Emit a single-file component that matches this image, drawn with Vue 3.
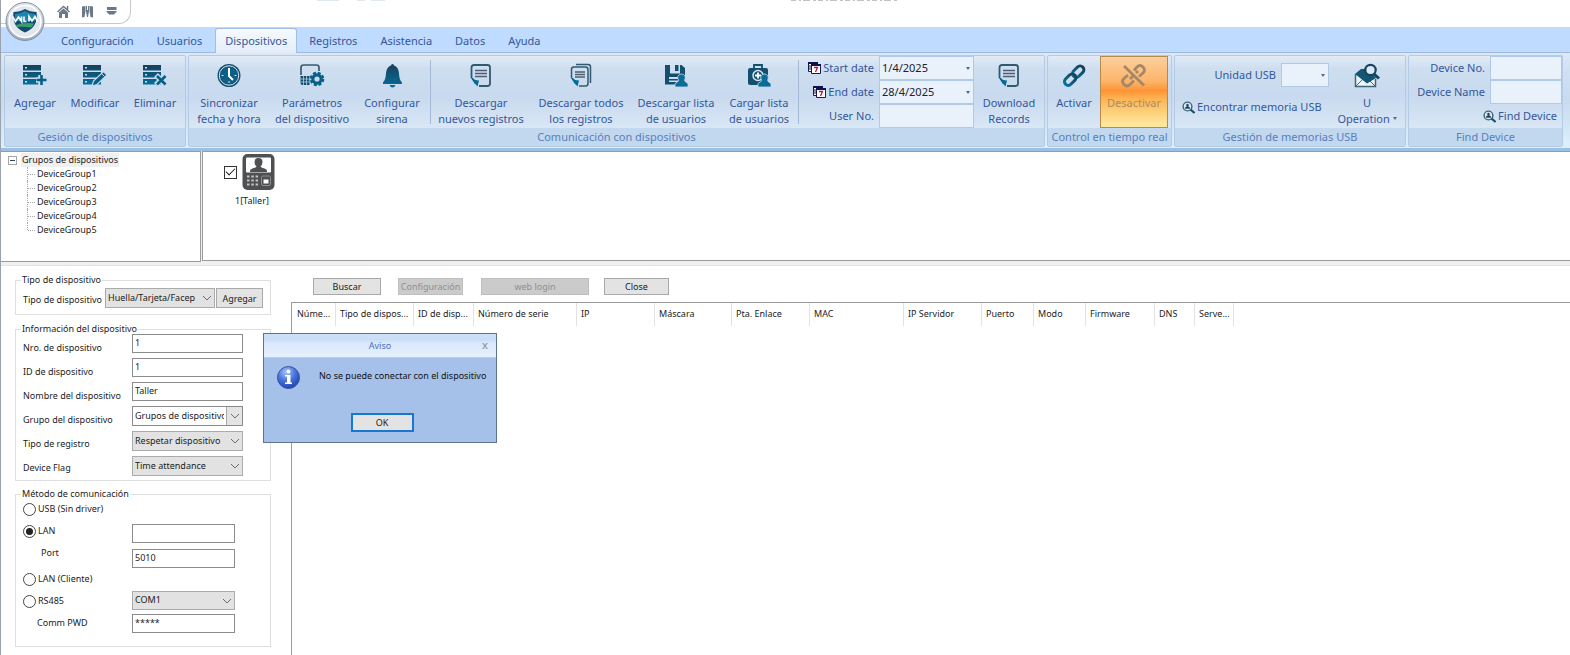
<script setup>
import { ref } from 'vue'

const tabs = ['Configuración', 'Usuarios', 'Dispositivos', 'Registros', 'Asistencia', 'Datos', 'Ayuda']
const activeTab = ref('Dispositivos')

const manage = [
  { icon: 'add', label: 'Agregar' },
  { icon: 'edit', label: 'Modificar' },
  { icon: 'remove', label: 'Eliminar' },
]
const sync = [
  { icon: 'clock', label: 'Sincronizar\nfecha y hora', size: 'w80' },
  { icon: 'params', label: 'Parámetros\ndel dispositivo', size: 'w86' },
  { icon: 'bell', label: 'Configurar\nsirena', size: 'w74' },
]
const transfer = [
  { icon: 'note', label: 'Descargar\nnuevos registros', size: 'w100' },
  { icon: 'notes', label: 'Descargar todos\nlos registros', size: 'w100' },
  { icon: 'save', label: 'Descargar lista\nde usuarios', size: 'w90' },
  { icon: 'kit', label: 'Cargar lista\nde usuarios', size: 'w76' },
]
const groups = ['DeviceGroup1', 'DeviceGroup2', 'DeviceGroup3', 'DeviceGroup4', 'DeviceGroup5']

const startDate = ref('1/4/2025')
const endDate = ref('28/4/2025')
const userNo = ref('')
const deviceChecked = ref(true)
const deviceNo = ref('1')
const deviceId = ref('1')
const deviceName = ref('Taller')
const link = ref('lan')
const address = ref('')
const port = ref('5010')
const password = ref('*****')

const columns = [
  { name: 'Núme...', width: 44 },
  { name: 'Tipo de dispos...', width: 78 },
  { name: 'ID de disp...', width: 60 },
  { name: 'Número de serie', width: 103 },
  { name: 'IP', width: 78 },
  { name: 'Máscara', width: 77 },
  { name: 'Pta. Enlace', width: 78 },
  { name: 'MAC', width: 94 },
  { name: 'IP Servidor', width: 78 },
  { name: 'Puerto', width: 52 },
  { name: 'Modo', width: 52 },
  { name: 'Firmware', width: 69 },
  { name: 'DNS', width: 40 },
  { name: 'Serve...', width: 39 },
]
</script>

<template>
  <div class="window">
    <svg class="defs" width="0" height="0" aria-hidden="true">
      <defs>
        <linearGradient id="ink" x1="0" y1="0" x2="0" y2="1">
          <stop offset="0" stop-color="#17405a" />
          <stop offset="1" stop-color="#04709c" />
        </linearGradient>
        <radialGradient id="orb" cx=".5" cy=".35" r=".65">
          <stop offset="0" stop-color="#ffffff" />
          <stop offset=".6" stop-color="#d9dee6" />
          <stop offset="1" stop-color="#98a4b6" />
        </radialGradient>
        <radialGradient id="ball" cx=".4" cy=".25" r=".8">
          <stop offset="0" stop-color="#a9c4f8" />
          <stop offset=".5" stop-color="#4a73dc" />
          <stop offset="1" stop-color="#1f3fa8" />
        </radialGradient>
        <symbol id="i-server" viewBox="0 0 26 26">
          <path fill="url(#ink)" fill-rule="evenodd" d="M1 2h18v5.500H1zM3 4v1.500h2V4zM1 9h18v5.500H1zM3 11v1.500h2V11zM1 16h18v5.500H1zM3 18v1.500h2V18z" />
        </symbol>
        <symbol id="i-add" viewBox="0 0 26 26">
          <use href="#i-server" />
          <path stroke="#c9daee" stroke-width="5.500" d="M19 12v10M14 17h10" />
          <path stroke="#075e86" stroke-width="2.600" d="M19.500 12v10M14.500 17h10" />
        </symbol>
        <symbol id="i-edit" viewBox="0 0 26 26">
          <use href="#i-server" />
          <path fill="#075e86" stroke="#c9daee" stroke-width="1.200" d="M21.500 8.500l3.500 3.500-10 9.500-5 1.500 1.500-5z" />
          <path stroke="#c9daee" d="M19.500 10.500l3 3" />
        </symbol>
        <symbol id="i-remove" viewBox="0 0 26 26">
          <use href="#i-server" />
          <path stroke="#c9daee" stroke-width="5.500" d="M14 12l10 10M24 12L14 22" />
          <path stroke="#075e86" stroke-width="2.600" d="M15 13l8.500 8.500M23.500 13L15 21.500" />
        </symbol>
        <symbol id="i-clock" viewBox="0 0 26 26">
          <circle cx="13" cy="12.500" r="11.500" fill="#14506e" />
          <circle cx="13" cy="12.500" r="9.700" fill="none" stroke="#d7e5f5" />
          <circle cx="13" cy="12.500" r="8.600" fill="#0c5f86" />
          <path fill="none" stroke="#fff" stroke-width="2" d="M13 5v8l4 4" />
          <path stroke="#d7e5f5" d="M5.500 12.500h2M18.500 12.500h2M13 18v2" />
        </symbol>
        <symbol id="i-params" viewBox="0 0 26 26">
          <path fill="none" stroke="#3b5a70" stroke-width="1.700" d="M2 12V4.500Q2 2 4.500 2h13Q20 2 20 4.500V8" />
          <path fill="#14506e" d="M1.500 13h9v9H3.500q-2 0-2-2z" />
          <path stroke="#c9daee" stroke-width=".7" d="M1.500 16h9M1.500 19h9M4.500 13v9M7.500 13v9" />
          <circle cx="18" cy="16" r="7.500" fill="#c9daee" />
          <circle cx="18" cy="16" r="4.200" fill="none" stroke="#075e86" stroke-width="3.200" />
          <circle cx="18" cy="16" r="6.200" fill="none" stroke="#075e86" stroke-width="2.200" stroke-dasharray="3 1.870" />
        </symbol>
        <symbol id="i-bell" viewBox="0 0 26 26">
          <path fill="url(#ink)" d="M12 2.500a1.500 1.500 0 0 1 3 0q4.500 1.500 5 7.500c.3 5 1 7 3 9.500v1.500H4v-1.500c2-2.500 2.700-4.500 3-9.500q.5-6 5-7.500zM10.500 22h6q-1 2.500-3 2.500t-3-2.500z" />
        </symbol>
        <symbol id="i-note" viewBox="0 0 26 26">
          <path fill="none" stroke="#33596f" stroke-width="1.800" d="M3.500 15V4.500Q3.500 2 6 2h13.500Q22 2 22 4.500v16Q22 23 19.500 23H11" />
          <path fill="none" stroke="#4d5f70" stroke-width="1.300" d="M7 7.500h12M7 10.500h12M7 13.500h12" />
          <path fill="#056a96" d="M3 15h2q1.500 2.500 6 2.500l-1.500 6q-1-1.500-3-3z" />
        </symbol>
        <symbol id="i-notes" viewBox="0 0 26 26">
          <path fill="none" stroke="#33596f" stroke-width="1.500" d="M8 1.500h12q2.500 0 2.500 2.500v16M3.500 15V6.500Q3.500 4 6 4h11.500Q20 4 20 6.500v14q0 2.500-2.500 2.500H11" />
          <path fill="none" stroke="#4d5f70" stroke-width="1.300" d="M7 9h10M7 11.500h10M7 14h10" />
          <path fill="#056a96" d="M3 15h2q1.500 2.500 6 2.500l-1.500 6q-1-1.500-3-3z" />
        </symbol>
        <symbol id="i-user" viewBox="0 0 26 26">
          <path fill="#0a6c98" stroke="#c9daee" stroke-width=".8" d="M18.500 11a3.700 3.700 0 0 1 3 6q-.5 1 .5 1.500l3 2v3.500H12v-3.500l3-2q1-.5.500-1.500a3.700 3.700 0 0 1 3-6z" />
        </symbol>
        <symbol id="i-save" viewBox="0 0 26 26">
          <path fill="#14506e" d="M2 2h5v8.500h10V2h1.500L22 5v16.500h-4V14H6v7.500H2z" />
          <path fill="#14506e" d="M12 2h3.500v6H12zM6 16h10v1.500H6zM6 19h10v2.500H6z" />
          <use href="#i-user" />
        </symbol>
        <symbol id="i-kit" viewBox="0 0 26 26">
          <path fill="none" stroke="#14506e" stroke-width="1.800" d="M8 5V2h8v3" />
          <rect x="2" y="5" width="20" height="17" rx="2" fill="#14506e" />
          <circle cx="12" cy="12.500" r="5" fill="none" stroke="#d7e5f5" stroke-width="1.500" />
          <path stroke="#fff" stroke-width="1.800" d="M12 9.500v6M9 12.500h6" />
          <use href="#i-user" />
        </symbol>
        <symbol id="i-link" viewBox="0 0 26 26">
          <g fill="none" stroke="url(#ink)" stroke-width="3">
            <rect x="-3.500" y="-6.500" width="7.500" height="13" rx="3.700" transform="translate(17 8.500) rotate(45)" />
            <rect x="-3.500" y="-6.500" width="7.500" height="13" rx="3.700" transform="translate(9 16.500) rotate(45)" />
          </g>
        </symbol>
        <symbol id="i-unlink" viewBox="0 0 26 26">
          <g fill="none" stroke="#a58868" stroke-width="2.800">
            <path d="M13 7.500l3-3.500q3-3 6 0t0 6l-4 3.500" />
            <path d="M13 17.500l-4 4q-3 3-6 0t0-6L7 12" />
            <path d="M3 3l20 19.500M9 16l3-3M15 10l2-2" />
          </g>
        </symbol>
        <symbol id="i-mail" viewBox="0 0 26 26">
          <path fill="#eef4fb" stroke="#3f6579" stroke-width="1.500" d="M1.500 11v12.500h20V16" />
          <path fill="none" stroke="#3f6579" d="M2 23l7-7M21 23l-6-6" />
          <path fill="#125673" d="M1 11l6-5h7l8 9-9 5.500z" />
          <circle cx="16.500" cy="7" r="5.200" fill="#dbe8f6" stroke="#14445e" stroke-width="2.200" />
          <path stroke="#14445e" stroke-width="3" d="M20 11l5 4.500" />
        </symbol>
        <symbol id="i-find" viewBox="0 0 13 13">
          <circle cx="5.500" cy="5.500" r="4.400" fill="#dbe8f6" stroke="#3c6479" stroke-width="1.400" />
          <path fill="#24475a" d="M5.500 2.800a1.500 1.500 0 0 1 .8 2.600l1.700 1.200v1.200H3V6.600l1.700-1.200a1.500 1.500 0 0 1 .8-2.600z" />
          <path stroke="#14506e" stroke-width="2.200" d="M8.500 8.500l4 3.500" />
        </symbol>
        <symbol id="i-cal" viewBox="0 0 13 13">
          <path fill="#fff" stroke="#1a1a50" d="M.500 1.500h9v9h-9z" />
          <path fill="#10104e" d="M0 1h10v2H0zM1.500 4h1v5h-1z" />
          <path fill="#fff" stroke="#1a1a50" d="M3.500 3.500h9v9h-9z" />
          <path fill="#10104e" d="M3 3h10v2H3z" />
          <path fill="none" stroke="#b01c3c" stroke-width="1.300" d="M6 6.500h3.500L7.500 11" />
        </symbol>
      </defs>
    </svg>

    <header class="titlebar">
      <div class="quick">
        <button class="quick-btn" aria-label="Inicio">
          <svg width="13" height="13" viewBox="0 0 13 13"><path fill="#6b7888" d="M6.500 3.500L11 7.500V13H8V9H5v4H2V7.500z" /><path fill="none" stroke="#6b7888" stroke-width="1.500" d="M.500 7l6-5.500 6 5.500M10.500 1v4" /></svg>
        </button>
        <button class="quick-btn" aria-label="Herramientas">
          <svg width="13" height="13" viewBox="0 0 13 13"><path fill="#6b7888" d="M1 1.500L4.500 1v5l-1 6L1 12.500zM12 1.500L8.500 1v5l1 6 2.500.500zM5 1h1v4h1V1h1v5.500L7 12H6L5 6.500z" /></svg>
        </button>
        <button class="quick-btn" aria-label="Personalizar">
          <svg width="13" height="13" viewBox="0 0 13 13"><path fill="#6b7888" d="M2 2h9.500v3H2zM1 6h11L9 9.500H4z" /></svg>
        </button>
      </div>
      <svg class="remnant" width="590" height="3" viewBox="0 0 590 3" aria-hidden="true">
        <path stroke="#dfe8ee" stroke-width="2" d="M6 0h22M46 0h8M60 0h14" />
        <path stroke="#c2c2c2" stroke-width="2" stroke-dasharray="5 3 2 2 7 3 3 2" d="M480 0h106" />
      </svg>
      <button class="orb" aria-label="Menú">
        <svg width="42" height="42" viewBox="0 0 42 42">
          <circle cx="21" cy="21.500" r="19" fill="url(#orb)" stroke="#8792a3" />
          <circle cx="21" cy="21.500" r="16" fill="#e2e7ee" stroke="#fff" stroke-width="1.500" />
          <path fill="#17486f" d="M9.500 12q6.500 0 11.500-3 5 3 11.500 3 1 8-2 13-3 5-9.500 7.500-6.500-2.500-9.500-7.500-3-5-2-13z" />
          <path fill="#1d86ae" d="M11 14q6-.5 10-3 4 2.500 10 3v7H11z" />
          <path fill="#36a066" d="M12 25q9-3 18-1.500-1 2.500-3 4-7-1-14-.500z" />
          <path fill="none" stroke="#f4fafc" stroke-width="1.700" d="M8.500 16.500l3 5 3-4.500 3 4.500V16.500M20 16.500v5h2.500M25 21.500v-5l3 4.500 3-4.500 2.500 5" />
        </svg>
      </button>
    </header>

    <nav class="tabs">
      <button v-for="t in tabs" :key="t" class="tab" :class="{ active: t === activeTab }" @click="activeTab = t">{{ t }}</button>
    </nav>

    <section class="ribbon">
      <div class="group">
        <div class="body">
          <button v-for="b in manage" :key="b.label" class="tool w60"><svg class="ico"><use :href="'#i-' + b.icon" /></svg><span>{{ b.label }}</span></button>
        </div>
        <div class="caption">Gesión de dispositivos</div>
      </div>

      <div class="group">
        <div class="body">
          <button v-for="b in sync" :key="b.label" class="tool" :class="b.size"><svg class="ico"><use :href="'#i-' + b.icon" /></svg><span>{{ b.label }}</span></button>
          <i class="sep"></i>
          <button v-for="b in transfer" :key="b.label" class="tool" :class="b.size"><svg class="ico"><use :href="'#i-' + b.icon" /></svg><span>{{ b.label }}</span></button>
          <i class="sep"></i>
          <div class="fields dates">
            <label for="start"><svg class="mini"><use href="#i-cal" /></svg>Start date</label>
            <span class="combo"><input id="start" v-model="startDate" /><i class="drop"></i></span>
            <label for="end"><svg class="mini"><use href="#i-cal" /></svg>End date</label>
            <span class="combo"><input id="end" v-model="endDate" /><i class="drop"></i></span>
            <label for="user">User No.</label>
            <span class="combo"><input id="user" v-model="userNo" /></span>
          </div>
          <button class="tool w68"><svg class="ico"><use href="#i-note" /></svg><span>Download<br />Records</span></button>
        </div>
        <div class="caption">Comunicación con dispositivos</div>
      </div>

      <div class="group">
        <div class="body live">
          <button class="tool w52"><svg class="ico"><use href="#i-link" /></svg><span>Activar</span></button>
          <button class="tool w68 hot" disabled><svg class="ico"><use href="#i-unlink" /></svg><span>Desactivar</span></button>
        </div>
        <div class="caption">Control en tiempo real</div>
      </div>

      <div class="group">
        <div class="body">
          <div class="usb">
            <div class="usb-row">
              <label for="usb">Unidad USB</label>
              <span class="combo small"><select id="usb"><option></option></select><i class="drop"></i></span>
            </div>
            <button class="inline"><svg class="mini"><use href="#i-find" /></svg>Encontrar memoria USB</button>
          </div>
          <button class="tool w76"><svg class="ico"><use href="#i-mail" /></svg><span>U<br />Operation <i class="caret"></i></span></button>
        </div>
        <div class="caption">Gestión de memorias USB</div>
      </div>

      <div class="group">
        <div class="body">
          <div class="finder">
            <div class="fields names">
              <label for="fno">Device No.</label>
              <span class="combo"><input id="fno" /></span>
              <label for="fname">Device Name</label>
              <span class="combo"><input id="fname" /></span>
            </div>
            <button class="inline right"><svg class="mini"><use href="#i-find" /></svg>Find Device</button>
          </div>
        </div>
        <div class="caption">Find Device</div>
      </div>
    </section>

    <section class="top">
      <div class="tree">
        <div class="root"><i class="minus"></i><span class="root-name">Grupos de dispositivos</span></div>
        <ul>
          <li v-for="g in groups" :key="g">{{ g }}</li>
        </ul>
      </div>
      <div class="devices">
        <label class="device">
          <input v-model="deviceChecked" type="checkbox" class="check" />
          <svg class="terminal" viewBox="0 0 33 37">
            <rect x=".5" y=".5" width="32" height="36" rx="5" fill="#4f5052" />
            <rect x="4" y="4" width="25" height="15" rx="1" fill="#fff" />
            <path fill="#4f5052" d="M16.500 4.500q4 0 4 4.200-.3 3-2 4.300 1 1.500 4 2t2.500 3.500H8q-.5-3 2.500-3.500t4-2q-1.700-1.300-2-4.300 0-4.200 4-4.200z" />
            <path stroke="#c4c4c4" stroke-width="2" stroke-dasharray="2.500 1.800" d="M5 23h11.500M5 27h11.500M5 31h11.500" />
            <rect x="19.500" y="22.500" width="9" height="9.500" rx="1.500" fill="none" stroke="#8d8e90" />
            <rect x="21.500" y="26" width="5" height="4" fill="#fff" />
          </svg>
          <span class="device-name">1[Taller]</span>
        </label>
      </div>
    </section>

    <section class="bottom">
      <form class="side" @submit.prevent>
        <fieldset class="type">
          <legend>Tipo de dispositivo</legend>
          <label for="kind">Tipo de dispositivo</label>
          <span class="pick"><select id="kind"><option>Huella/Tarjeta/Facep</option></select><svg class="chev"><path d="M1 1l4 4 4-4" /></svg></span>
          <button class="btn add">Agregar</button>
        </fieldset>

        <fieldset class="info">
          <legend>Información del dispositivo</legend>
          <div class="labels">
            <label for="d1">Nro. de dispositivo</label>
            <label for="d2">ID de dispositivo</label>
            <label for="d3">Nombre del dispositivo</label>
            <label for="d4">Grupo del dispositivo</label>
            <label for="d5">Tipo de registro</label>
            <label for="d6">Device Flag</label>
          </div>
          <div class="inputs">
            <input id="d1" v-model="deviceNo" class="box" />
            <input id="d2" v-model="deviceId" class="box" />
            <input id="d3" v-model="deviceName" class="box" />
            <span class="pick white"><select id="d4"><option>Grupos de dispositivos</option></select><svg class="chev"><path d="M1 1l4 4 4-4" /></svg></span>
            <span class="pick"><select id="d5"><option>Respetar dispositivo</option></select><svg class="chev"><path d="M1 1l4 4 4-4" /></svg></span>
            <span class="pick"><select id="d6"><option>Time attendance</option></select><svg class="chev"><path d="M1 1l4 4 4-4" /></svg></span>
          </div>
        </fieldset>

        <fieldset class="comm">
          <legend>Método de comunicación</legend>
          <div class="options">
            <label><input v-model="link" type="radio" class="radio" value="usb" />USB (Sin driver)</label>
            <label><input v-model="link" type="radio" class="radio" value="lan" />LAN</label>
            <label for="port" class="indent">Port</label>
            <label class="client"><input v-model="link" type="radio" class="radio" value="client" />LAN (Cliente)</label>
            <label><input v-model="link" type="radio" class="radio" value="rs485" />RS485</label>
            <label for="pwd" class="indent less">Comm PWD</label>
          </div>
          <div class="values">
            <input v-model="address" class="box" aria-label="LAN" />
            <input id="port" v-model="port" class="box" />
            <span class="pick com"><select aria-label="RS485"><option>COM1</option></select><svg class="chev"><path d="M1 1l4 4 4-4" /></svg></span>
            <input id="pwd" v-model="password" class="box" />
          </div>
        </fieldset>
      </form>

      <div class="main">
        <div class="actions">
          <button class="btn b68">Buscar</button>
          <button class="btn b65" disabled>Configuración</button>
          <button class="btn b108" disabled>web login</button>
          <button class="btn b65">Close</button>
        </div>
        <div class="grid">
          <table>
            <thead>
              <tr><th v-for="c in columns" :key="c.name" :style="{ width: c.width + 'px' }">{{ c.name }}</th></tr>
            </thead>
          </table>
        </div>
      </div>
    </section>

    <div class="dialog" role="dialog" aria-labelledby="dialog-title">
      <div class="dialog-head"><span id="dialog-title">Aviso</span><button class="close" aria-label="Cerrar">x</button></div>
      <div class="dialog-body">
        <svg width="25" height="25" viewBox="0 0 25 25">
          <circle cx="12.500" cy="12.500" r="11" fill="url(#ball)" stroke="#3553a8" />
          <circle cx="12.500" cy="6.500" r="2" fill="#fff" />
          <path fill="#fff" d="M9 10h5.500v7.500H16V19H9v-1.500h2V11.500H9z" />
        </svg>
        <p>No se puede conectar con el dispositivo</p>
      </div>
      <button class="ok">OK</button>
    </div>
  </div>
</template>

<style>
body { margin: 0; background: #fff; }
html, body, #app { height: 100%; }
</style>

<style scoped>
* { box-sizing: border-box; }
.window { position: relative; display: flex; flex-direction: column; min-height: 100%; border-left: 1px solid #9aa3ad; background: #fff; font: 9px/14px "Noto Sans", "Open Sans", sans-serif; color: #1c1c1c; overflow: hidden; }
.defs { position: absolute; }
button, input, select { font: inherit; color: inherit; margin: 0; padding: 0; border: 0; border-radius: 0; background: none; appearance: none; outline: 0; }
i { font-style: normal; }
svg { flex: none; }

.titlebar { position: relative; display: flex; height: 27px; }
.quick { display: flex; align-items: center; gap: 11px; width: 130px; height: 24px; padding-left: 56px; border: solid #c9c9cb; border-width: 0 1px 1px 0; border-radius: 0 0 12px 0; }
.quick-btn { width: 13px; height: 13px; display: flex; }
.remnant { margin-left: 180px; }
.orb { position: absolute; left: 3px; top: 0; z-index: 2; width: 42px; height: 42px; }

.tabs { display: flex; height: 26px; padding-left: 48px; background: #bfdbff; border-bottom: 1px solid #9dbbe0; font-size: 11px; }
.tab { height: 26px; padding: 1px 11px 0 12px; color: #34579a; }
.tab.active { height: 25px; margin: 1px 0 0 2px; padding: 0 9px; border: 1px solid #a0bde4; border-bottom: 0; border-radius: 3px 3px 0 0; background: linear-gradient(#f6faff, #e3edf9); }

.ribbon { display: flex; gap: 2px; height: 98px; padding: 2px 4px 1px 3px; background: linear-gradient(#dce8f6, #cfe0f3 20%, #c8dbf0 50%, #dcf0fc); border-bottom: 3px solid #9cc0e2; font-size: 11px; color: #34579a; }
.group { display: flex; flex-direction: column; flex: none; border: 1px solid #b4cbe6; border-radius: 2px; background: linear-gradient(#e2ebf6, #cedef0 14%, #c8daef 45%, #d9e7f5 80%); }
.body { display: flex; flex: none; height: 72px; }
.live { padding-right: 3px; }
.caption { height: 18px; line-height: 18px; text-align: center; color: #5880ba; background: #c2d8ef; }
.tool { display: flex; flex-direction: column; align-items: center; flex: none; padding-top: 7px; white-space: pre; line-height: 16px; }
.tool span { margin-top: 6px; text-align: center; }
.ico { width: 26px; height: 26px; }
.w52 { width: 52px; }
.w60 { width: 60px; }
.w68 { width: 70px; }
.w74 { width: 74px; }
.w76 { width: 76px; }
.w80 { width: 80px; }
.w86 { width: 86px; }
.w90 { width: 90px; }
.w100 { width: 100px; }
.sep { width: 1px; height: 64px; margin: 4px 0 0 1px; background: #a3b8d2; }
.hot { width: 68px; border: 1px solid #b58a4c; background: linear-gradient(#fbcf9e, #fdb468 35%, #fc9436 48%, #fdb454 60%, #ffe79a 95%); color: #a98c68; padding-top: 6px; }

.fields { display: grid; grid-auto-rows: 24px; align-items: center; column-gap: 5px; }
.dates { grid-template-columns: 75px 95px; }
.names { grid-template-columns: 76px 72px; }
.fields label { display: flex; align-items: center; justify-content: flex-end; gap: 2px; white-space: nowrap; padding-bottom: 1px; }
.mini { width: 13px; height: 13px; }
.combo { position: relative; display: block; height: 24px; }
.combo input, .combo select { width: 100%; height: 24px; padding: 0 2px 2px; border: 1px solid #b0c9e6; background: #e9f1fb; color: #1c2430; }
.drop, .caret { border: solid transparent; border-width: 3px 2px 0; border-top-color: #4c6a94; }
.drop { position: absolute; right: 4px; top: 11px; }
.caret { display: inline-block; vertical-align: 3px; }
.usb { display: flex; flex-direction: column; align-items: flex-end; gap: 13px; width: 154px; padding: 7px 0 0 7px; }
.usb-row { display: flex; align-items: center; gap: 5px; }
.small { width: 48px; }
.inline { display: flex; align-items: center; align-self: flex-start; gap: 2px; white-space: nowrap; }
.inline.right { align-self: flex-end; height: 24px; margin-right: 5px; }
.finder { display: flex; flex-direction: column; }

.top { display: flex; height: 115px; gap: 1px; background: #f0f0f0; padding-bottom: 3px; border-bottom: 1px solid #e4e4e4; }
.tree { width: 200px; border: 1px solid #9b9b9b; border-left: 0; background: #fff; padding: 1px 0 0 7px; }
.root { display: flex; align-items: center; gap: 4px; height: 14px; }
.minus { display: flex; align-items: center; width: 9px; height: 9px; border: 1px solid #a5a5a5; padding: 1px; }
.minus::after { content: ""; width: 5px; height: 1px; background: #345; }
.root-name { padding: 0 1px; background: #f0f0f0; }
ul { margin: 0 0 0 19px; padding: 0; list-style: none; }
li { position: relative; height: 14px; padding-left: 9px; border-left: 1px dotted #a8a8a8; }
li + li { padding-top: 0; }
li::before { content: ""; position: absolute; left: 0; top: 7px; width: 7px; border-top: 1px dotted #a8a8a8; }
li:last-child { border-left-color: transparent; }
li:last-child::after { content: ""; position: absolute; left: -1px; top: 0; height: 7px; border-left: 1px dotted #a8a8a8; }
.devices { flex: 1; border: solid #9b9b9b; border-width: 1px 0 1px 1px; background: #fff; margin-bottom: 1px; padding: 1px 0 0 21px; }
.device { display: grid; grid-template-columns: 14px 34px; column-gap: 4px; align-items: center; width: 52px; }
.check { width: 13px; height: 13px; border: 1px solid #333; background: #fff; display: grid; place-items: center; }
.check:checked::after { content: ""; width: 8px; height: 4px; border: solid #222; border-width: 0 0 1px 1px; transform: rotate(-45deg); margin-top: -3px; }
.terminal { width: 33px; height: 38px; }
.device-name { grid-column: 1 / 3; padding: 3px 0 0 11px; }

.bottom { display: flex; flex: 1; }
.side { width: 290px; padding: 7px 0 0 14px; }
fieldset { display: flex; min-width: 0; width: 256px; margin: 0; padding: 0 0 0 7px; border: 1px solid #dfdfdf; }
legend { margin-left: -2px; padding: 0 1px; height: 14px; line-height: 14px; font-size: 9px; }
fieldset label { white-space: nowrap; }
.type { height: 42px; margin-bottom: 7px; }
.type label { width: 82px; padding-top: 6px; }
.type .pick { width: 110px; margin-top: 1px; }
.add { width: 47px; margin: 1px 0 0 1px; height: 20px; }
.info { height: 159px; margin-bottom: 6px; }
.labels { display: flex; flex-direction: column; width: 109px; padding-top: 5px; }
.labels label { flex: none; height: 24px; }
.inputs { display: flex; flex-direction: column; gap: 5px; width: 111px; margin-top: -2px; }
.box { flex: none; width: 100%; height: 19px; padding: 0 2px 2px; border: 1px solid #8b8b8b; background: #fff; }
.pick { position: relative; display: block; flex: none; height: 20px; }
.pick select { width: 100%; height: 100%; padding: 0 18px 1px 2px; border: 1px solid #ababab; background: #e2e2e2; text-overflow: clip; }
.pick.white select { background: linear-gradient(90deg, #fff 93px, #a8a8a8 93px, #a8a8a8 94px, #e4e4e4 94px); border-color: #8b8b8b; }
.chev { position: absolute; right: 3px; top: 7px; width: 10px; height: 7px; fill: none; stroke: #6a6a6a; pointer-events: none; }
.comm { height: 160px; }
.options { display: flex; flex-direction: column; width: 109px; margin-top: -3px; }
.options label { display: flex; flex: none; align-items: center; gap: 2px; height: 22px; }
.options .indent { padding-left: 18px; height: 21px; }
.options .less { padding-left: 14px; }
.options .client { margin-top: 5px; }
.radio { width: 13px; height: 13px; border: 1px solid #444; border-radius: 50%; background: #fff; display: grid; place-items: center; }
.radio:checked::after { content: ""; width: 7px; height: 7px; border-radius: 50%; background: #222; }
.values { display: flex; flex-direction: column; width: 103px; padding-top: 23px; gap: 6px; }
.com { height: 19px; margin-top: 17px; }
.values .com + .box { margin-top: -2px; }

.main { flex: 1; display: flex; flex-direction: column; min-width: 0; }
.actions { display: flex; height: 36px; padding: 12px 0 0 22px; }
.btn { height: 17px; border: 1px solid #a9a9a9; background: #e3e3e3; line-height: 13px; text-align: center; }
.btn:disabled { background: #cbcbcb; border-color: #bfbfbf; color: #8f8f8f; }
.b68 { width: 68px; margin-right: 17px; }
.b65 { width: 65px; }
.b65 + .b108 { margin-left: 18px; }
.b108 { width: 108px; margin-right: 15px; }
.type .btn.add { height: 20px; }
.grid { flex: 1; border: solid #9a9a9a; border-width: 1px 0 0 1px; }
table { border-collapse: separate; border-spacing: 0; table-layout: fixed; width: 942px; }
th { height: 23px; padding: 0 0 2px 4px; font-weight: 400; text-align: left; border-right: 1px solid #e2e2e2; white-space: nowrap; overflow: hidden; }
tr th:first-child { padding-left: 5px; }

.dialog { position: absolute; left: 262px; top: 333px; width: 234px; height: 110px; border: 1px solid #5d7390; background: #a5c1e9; display: flex; flex-direction: column; align-items: center; }
.dialog-head { position: relative; width: 100%; height: 24px; line-height: 24px; text-align: center; color: #4c6fb8; background: linear-gradient(#cfe0f8, #c9ddf8 25%, #dae8fb 40%, #e6f1fe); border-bottom: 1px solid #b4cff2; }
.close { position: absolute; right: 6px; top: 2px; width: 10px; height: 18px; line-height: 16px; color: #7f8896; font-size: 11px; }
.dialog-body { display: flex; width: 100%; gap: 18px; padding: 7px 0 0 12px; }
.dialog-body p { margin: 4px 0 0; white-space: nowrap; color: #111; }
.ok { width: 63px; height: 19px; margin: 23px 0 0 4px; border: 2px solid #1679cf; background: #e3e3e3; }
</style>
